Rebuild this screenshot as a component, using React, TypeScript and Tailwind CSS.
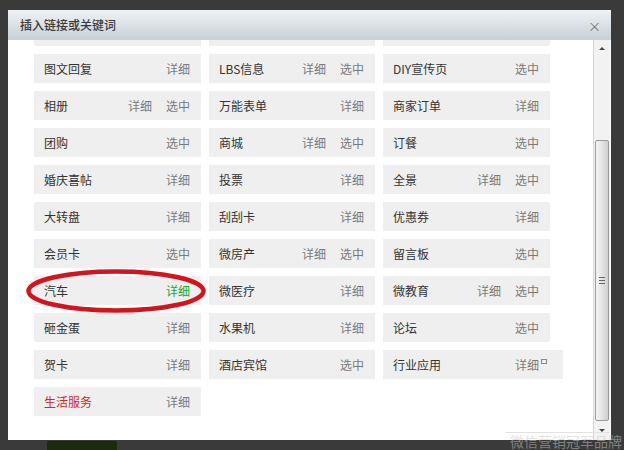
import React from 'react'

type Item = {
  label: string
  actions: string[]
  red?: boolean
  green?: boolean
  wide?: boolean
}

const rows: Item[][] = [
  [
    { label: '图文回复', actions: ['详细'] },
    { label: 'LBS信息', actions: ['详细', '选中'] },
    { label: 'DIY宣传页', actions: ['选中'] },
  ],
  [
    { label: '相册', actions: ['详细', '选中'] },
    { label: '万能表单', actions: ['详细'] },
    { label: '商家订单', actions: ['详细'] },
  ],
  [
    { label: '团购', actions: ['选中'] },
    { label: '商城', actions: ['详细', '选中'] },
    { label: '订餐', actions: ['选中'] },
  ],
  [
    { label: '婚庆喜帖', actions: ['详细'] },
    { label: '投票', actions: ['详细'] },
    { label: '全景', actions: ['详细', '选中'] },
  ],
  [
    { label: '大转盘', actions: ['详细'] },
    { label: '刮刮卡', actions: ['详细'] },
    { label: '优惠券', actions: ['详细'] },
  ],
  [
    { label: '会员卡', actions: ['选中'] },
    { label: '微房产', actions: ['详细', '选中'] },
    { label: '留言板', actions: ['选中'] },
  ],
  [
    { label: '汽车', actions: ['详细'], green: true },
    { label: '微医疗', actions: ['详细'] },
    { label: '微教育', actions: ['详细', '选中'] },
  ],
  [
    { label: '砸金蛋', actions: ['详细'] },
    { label: '水果机', actions: ['详细'] },
    { label: '论坛', actions: ['选中'] },
  ],
  [
    { label: '贺卡', actions: ['详细'] },
    { label: '酒店宾馆', actions: ['选中'] },
    { label: '行业应用', actions: ['详细'], wide: true },
  ],
  [{ label: '生活服务', actions: ['详细'], red: true }],
]

function Card({ item }: { item: Item }) {
  return (
    <div
      className={`h-[29px] bg-[#efefef] flex items-center pl-[10px] text-[12px] ${
        item.wide ? 'w-[180px] pr-[24px]' : 'pr-[11px]'
      }`}
    >
      <span className={`flex-1 ${item.red ? 'text-[#d9261c]' : 'text-[#333]'}`}>{item.label}</span>
      <div className={`flex gap-[14px] ${item.green ? 'text-[#22a822]' : 'text-[#7a7a7a]'}`}>
        {item.actions.map((a) => (
          <span key={a}>{a}</span>
        ))}
      </div>
      {item.wide && <span className="ml-[2px] -mr-[8px] mb-[6px] w-[6px] h-[5px] border border-[#888]" />}
    </div>
  )
}

export default function App() {
  return (
    <div
      className="w-[624px] h-[450px] bg-[#3a3a3a] relative overflow-hidden pt-[10px] pl-[8px]"
      style={{ fontFamily: '"Noto Sans CJK SC", "Microsoft YaHei", sans-serif' }}
    >
      {/* Dialog */}
      <div className="w-[603px] h-[430px] flex flex-col bg-white">
        {/* Title bar */}
        <div className="h-[30px] shrink-0 flex items-center justify-between pl-[12px] pr-[10px] bg-gradient-to-b from-[#eef2f5] to-[#c8d0d6]">
          <span className="text-[12px] font-medium text-[#3a3a3a]">插入链接或关键词</span>
          <span className="text-[13px] text-[#777] leading-none">×</span>
        </div>

        {/* Body */}
        <div className="flex-1 flex overflow-hidden">
          <div className="flex-1 pl-[26px] overflow-hidden">
            <div className="grid grid-cols-[167px_166px_167px] gap-x-[8px] gap-y-[8px]">
              <div className="h-[6px] bg-[#efefef]" />
              <div className="h-[6px] bg-[#efefef]" />
              <div className="h-[6px] bg-[#efefef]" />
              {rows.map((row, i) =>
                row.map((item, j) => <Card key={`${i}-${j}`} item={item} />)
              )}
            </div>
          </div>

          {/* Scrollbar */}
          <div className="w-[17px] mr-[1px] flex flex-col bg-[#f2f2f2] border-l border-[#d6d6d6]">
            <div className="h-[17px] flex items-center justify-center">
              <span className="w-0 h-0 border-x-[3px] border-x-transparent border-b-[3px] border-b-[#444]" />
            </div>
            <div className="h-[83px]" />
            <div className="h-[281px] mx-[1px] border border-[#9a9a9a] rounded-[2px] bg-gradient-to-r from-[#f4f4f4] via-[#e4e4e4] to-[#cfcfcf] flex items-center justify-center">
              <div className="flex flex-col gap-[2px]">
                <span className="w-[6px] h-px bg-[#666]" />
                <span className="w-[6px] h-px bg-[#666]" />
                <span className="w-[6px] h-px bg-[#666]" />
              </div>
            </div>
            <div className="flex-1 flex items-center justify-center">
              <span className="w-0 h-0 border-x-[3px] border-x-transparent border-t-[3px] border-t-[#444]" />
            </div>
          </div>
        </div>
      </div>

      {/* Button peeking below the dialog */}
      <div className="ml-[39px] mt-[1px] w-[70px] h-[12px] bg-[#1c2a0e] rounded-t-[2px]" />

      {/* Red annotation ellipse */}
      <svg className="absolute left-[25px] top-[268px]" width="182" height="46" viewBox="0 0 182 46">
        <ellipse cx="91" cy="23" rx="87.5" ry="19.5" fill="none" stroke="#d4141c" strokeWidth="4.5" />
      </svg>

      {/* Watermark */}
      <div className="absolute left-[506px] top-[432px] w-[104px] h-px bg-[#e2e2e2]" />
      <span className="absolute left-[510px] top-[434px] text-[14px] leading-none text-[#c8c8c8] opacity-50 whitespace-nowrap">
        微信营销冠军品牌
      </span>
    </div>
  )
}
